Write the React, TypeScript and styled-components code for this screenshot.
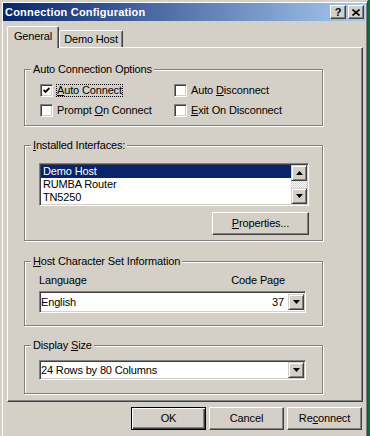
import styled, { createGlobalStyle, css } from 'styled-components';

const FACE = '#d4d0c8';

const GlobalStyle = createGlobalStyle`
  html, body {
    margin: 0;
    padding: 0;
    background: #0b6b3a;
  }
  body {
    font-family: "Liberation Sans", Arial, sans-serif;
    font-size: 11px;
    letter-spacing: -0.15px;
    color: #000;
  }
`;

const raised = css`
  border: 1px solid;
  border-color: #fff #404040 #404040 #fff;
  box-shadow: inset -1px -1px 0 #808080;
`;

const raisedSmall = css`
  border: 1px solid;
  border-color: ${FACE} #404040 #404040 ${FACE};
  box-shadow: inset 1px 1px 0 #fff, inset -1px -1px 0 #808080;
`;

const sunken = css`
  border: 1px solid;
  border-color: #808080 #fff #fff #808080;
  box-shadow: inset 1px 1px 0 #404040, inset -1px -1px 0 ${FACE};
  padding: 1px;
  background: #fff;
`;

const Window = styled.div`
  box-sizing: border-box;
  width: 368px;
  height: 436px;
  background: ${FACE};
  border-style: solid;
  border-width: 2px 1px 0 2px;
  border-color: ${FACE} #404040 ${FACE} ${FACE};
  box-shadow: inset 1px 1px 0 #fff, inset -1px 0 0 #808080;
  padding: 1px 2px 0 1px;
  display: flex;
  flex-direction: column;
`;

const TitleBar = styled.div`
  height: 18px;
  display: flex;
  align-items: flex-start;
  padding: 0 1px 0 2px;
  background: linear-gradient(to right, #0a246a, #a6caf0);
`;

const Caption = styled.span`
  flex: 1;
  color: #fff;
  font-weight: bold;
  letter-spacing: 0.2px;
  line-height: 18px;
  white-space: nowrap;
`;

const CaptionButtons = styled.div`
  display: flex;
  gap: 2px;
  margin-top: 2px;
`;

const CaptionButton = styled.div`
  box-sizing: border-box;
  width: 16px;
  height: 14px;
  background: ${FACE};
  ${raised};
  display: flex;
  align-items: center;
  justify-content: center;
  font-weight: bold;
  font-size: 11px;
  line-height: 12px;
`;

const Client = styled.div`
  flex: 1;
  display: flex;
  flex-direction: column;
  padding: 5px 2px 0 4px;
`;

const TabStrip = styled.div`
  display: flex;
  align-items: flex-end;
  height: 21px;
`;

const Tab = styled.div<{ $active?: boolean; $w: number }>`
  position: relative;
  z-index: 1;
  box-sizing: border-box;
  width: ${p => p.$w}px;
  height: ${p => (p.$active ? 22 : 17)}px;
  margin-bottom: ${p => (p.$active ? -1 : 0)}px;
  padding-top: ${p => (p.$active ? 3 : 2)}px;
  background: ${FACE};
  border: 1px solid;
  border-bottom: none;
  border-color: #fff #404040 transparent #fff;
  border-radius: 2px 2px 0 0;
  box-shadow: inset -1px 0 0 #808080;
  text-align: center;
  line-height: 13px;
`;

const Panel = styled.div`
  box-sizing: border-box;
  height: 355px;
  border: 1px solid;
  border-color: #fff #404040 #404040 #fff;
  box-shadow: inset -1px -1px 0 #808080;
  padding: 21px 0 0 16px;
  display: flex;
  flex-direction: column;
`;

const Group = styled.div<{ $top?: number; $pad: string }>`
  position: relative;
  box-sizing: border-box;
  width: 299px;
  margin-top: ${p => p.$top ?? 0}px;
  padding: ${p => p.$pad};
  border: 1px solid #808080;
  box-shadow: 1px 1px 0 #fff, inset 1px 1px 0 #fff;
`;

const Legend = styled.span`
  position: absolute;
  top: -7px;
  left: 6px;
  padding: 0 2px;
  background: ${FACE};
  line-height: 13px;
  white-space: nowrap;
`;

const Mn = styled.span`
  text-decoration: underline;
`;

const CheckGrid = styled.div`
  display: grid;
  grid-template-columns: 134px auto;
  row-gap: 7px;
`;

const CheckItem = styled.div`
  display: flex;
  align-items: center;
  height: 13px;
`;

const CheckBox = styled.div`
  box-sizing: border-box;
  width: 13px;
  height: 13px;
  ${sunken};
  display: flex;
  align-items: center;
  justify-content: center;
`;

const CheckLabel = styled.span<{ $focused?: boolean }>`
  margin-left: 3px;
  padding: 0 1px;
  line-height: 13px;
  white-space: nowrap;
  ${p =>
    p.$focused &&
    css`
      outline: 1px dotted #000;
      outline-offset: -1px;
    `}
`;

const ListBox = styled.div`
  box-sizing: border-box;
  width: 270px;
  height: 43px;
  ${sunken};
  display: flex;
`;

const ListItems = styled.div`
  flex: 1;
  display: flex;
  flex-direction: column;
`;

const ListItem = styled.div<{ $selected?: boolean }>`
  height: 13px;
  line-height: 13px;
  padding-left: 2px;
  white-space: nowrap;
  background: ${p => (p.$selected ? '#0a246a' : 'transparent')};
  color: ${p => (p.$selected ? '#fff' : '#000')};
`;

const ScrollBar = styled.div`
  width: 16px;
  display: flex;
  flex-direction: column;
`;

const ArrowButton = styled.div<{ $h?: number }>`
  box-sizing: border-box;
  width: 16px;
  height: ${p => p.$h ?? 16}px;
  background: ${FACE};
  ${raisedSmall};
  display: flex;
  align-items: center;
  justify-content: center;
`;

const ScrollTrack = styled.div`
  flex: 1;
  background: repeating-conic-gradient(#fff 0% 25%, ${FACE} 0% 50%) 0 0 / 2px 2px;
`;

const ButtonRow = styled.div<{ $top: number; $right?: number }>`
  display: flex;
  justify-content: flex-end;
  gap: 3px;
  margin-top: ${p => p.$top}px;
  padding-right: ${p => p.$right ?? 0}px;
`;

const PushButton = styled.button<{ $w: number; $default?: boolean }>`
  box-sizing: border-box;
  width: ${p => p.$w}px;
  height: 23px;
  padding: 0;
  font: inherit;
  letter-spacing: inherit;
  color: #000;
  line-height: 13px;
  background: ${FACE};
  ${p =>
    p.$default
      ? css`
          border: 1px solid #000;
          box-shadow: inset 1px 1px 0 #fff, inset -1px -1px 0 #404040, inset -2px -2px 0 #808080;
        `
      : raised};
`;

const FieldLabels = styled.div`
  width: 267px;
  box-sizing: border-box;
  display: flex;
  justify-content: space-between;
  padding-right: 21px;
  line-height: 13px;
`;

const Combo = styled.div<{ $h: number; $top?: number }>`
  box-sizing: border-box;
  width: 267px;
  height: ${p => p.$h}px;
  margin-top: ${p => p.$top ?? 0}px;
  ${sunken};
  display: flex;
  align-items: center;
`;

const ComboText = styled.span`
  flex: 1;
  line-height: 13px;
  white-space: nowrap;
`;

const ComboValue = styled.span`
  margin-right: 4px;
  line-height: 13px;
`;

const ArrowUp = () => (
  <svg width="7" height="4" viewBox="0 0 7 4">
    <polygon points="3.5,0 7,4 0,4" fill="#000" />
  </svg>
);

const ArrowDown = () => (
  <svg width="7" height="4" viewBox="0 0 7 4">
    <polygon points="0,0 7,0 3.5,4" fill="#000" />
  </svg>
);

const CheckMark = () => (
  <svg width="7" height="7" viewBox="0 0 7 7">
    <polyline points="0.5,3 2.5,5 6.5,1" fill="none" stroke="#000" strokeWidth="1.8" />
  </svg>
);

const CloseGlyph = () => (
  <svg width="8" height="7" viewBox="0 0 8 7">
    <path d="M0.5 0.5 L7.5 6.5 M7.5 0.5 L0.5 6.5" stroke="#000" strokeWidth="1.6" />
  </svg>
);

const Check = ({ checked, focused, children }: { checked?: boolean; focused?: boolean; children: React.ReactNode }) => (
  <CheckItem>
    <CheckBox>{checked && <CheckMark />}</CheckBox>
    <CheckLabel $focused={focused}>{children}</CheckLabel>
  </CheckItem>
);

export default function App() {
  return (
    <>
      <GlobalStyle />
      <Window>
        <TitleBar>
          <Caption>Connection Configuration</Caption>
          <CaptionButtons>
            <CaptionButton>?</CaptionButton>
            <CaptionButton>
              <CloseGlyph />
            </CaptionButton>
          </CaptionButtons>
        </TitleBar>
        <Client>
          <TabStrip>
            <Tab $active $w={52}>General</Tab>
            <Tab $w={64}>Demo Host</Tab>
          </TabStrip>
          <Panel>
            <Group $pad="14px 0 8px 15px">
              <Legend>Auto Connection Options</Legend>
              <CheckGrid>
                <Check checked focused>
                  <Mn>A</Mn>uto Connect
                </Check>
                <Check>
                  Auto <Mn>D</Mn>isconnect
                </Check>
                <Check>
                  Prompt <Mn>O</Mn>n Connect
                </Check>
                <Check>
                  <Mn>E</Mn>xit On Disconnect
                </Check>
              </CheckGrid>
            </Group>

            <Group $top={19} $pad="17px 13px 5px 14px">
              <Legend>
                <Mn>I</Mn>nstalled Interfaces:
              </Legend>
              <ListBox>
                <ListItems>
                  <ListItem $selected>Demo Host</ListItem>
                  <ListItem>RUMBA Router</ListItem>
                  <ListItem>TN5250</ListItem>
                </ListItems>
                <ScrollBar>
                  <ArrowButton>
                    <ArrowUp />
                  </ArrowButton>
                  <ScrollTrack />
                  <ArrowButton>
                    <ArrowDown />
                  </ArrowButton>
                </ScrollBar>
              </ListBox>
              <ButtonRow $top={6}>
                <PushButton $w={97}>
                  <Mn>P</Mn>roperties...
                </PushButton>
              </ButtonRow>
            </Group>

            <Group $top={20} $pad="12px 0 12px 14px">
              <Legend>
                <Mn>H</Mn>ost Character Set Information
              </Legend>
              <FieldLabels>
                <span>Language</span>
                <span>Code Page</span>
              </FieldLabels>
              <Combo $h={22} $top={4}>
                <ComboText>English</ComboText>
                <ComboValue>37</ComboValue>
                <ArrowButton $h={16}>
                  <ArrowDown />
                </ArrowButton>
              </Combo>
            </Group>

            <Group $top={19} $pad="14px 0 13px 14px">
              <Legend>
                Display <Mn>S</Mn>ize
              </Legend>
              <Combo $h={20}>
                <ComboText>24 Rows by 80 Columns</ComboText>
                <ArrowButton $h={16}>
                  <ArrowDown />
                </ArrowButton>
              </Combo>
            </Group>
          </Panel>
          <ButtonRow $top={5} $right={1}>
            <PushButton $w={75} $default>
              OK
            </PushButton>
            <PushButton $w={75}>Cancel</PushButton>
            <PushButton $w={75}>
              Re<Mn>c</Mn>onnect
            </PushButton>
          </ButtonRow>
        </Client>
      </Window>
    </>
  );
}
